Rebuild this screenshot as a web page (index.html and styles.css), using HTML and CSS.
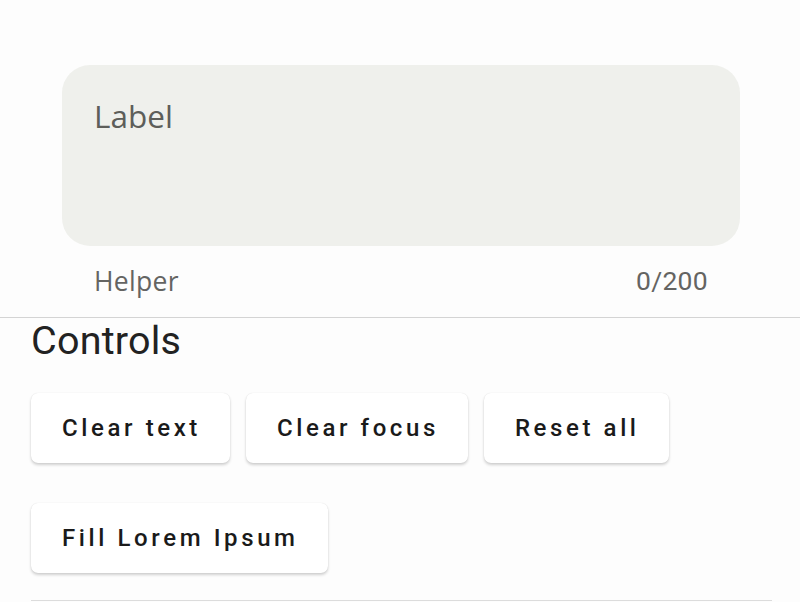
FILE: index.html
```html
<!DOCTYPE html>
<html lang="en">
<head>
<meta charset="utf-8">
<title>Text field</title>
<link rel="stylesheet" href="styles.css">
</head>
<body>
<div class="top">
  <div class="field">
    <span class="field-label">Label</span>
  </div>
  <div class="support">
    <span class="helper">Helper</span>
    <span class="counter">0/200</span>
  </div>
</div>
<div class="rule"></div>
<section class="controls">
  <h2 class="controls-title">Controls</h2>
  <div class="buttons">
    <button class="btn">Clear text</button>
    <button class="btn">Clear focus</button>
    <button class="btn">Reset all</button>
    <button class="btn">Fill Lorem Ipsum</button>
  </div>
  <div class="bottom-rule"></div>
</section>
</body>
</html>
```
FILE: styles.css
```css
html, body {
  margin: 0;
  padding: 0;
  background: #fdfdfd;
}
body {
  width: 800px;
  height: 602px;
  overflow: hidden;
  font-family: "Open Sans", "Noto Sans", sans-serif;
}
.top {
  padding: 65px 60px 0 62px;
}
.field {
  height: 181px;
  background: #eff0ec;
  border-radius: 28px;
  padding: 29px 32px 0 32px;
  box-sizing: border-box;
}
.field-label {
  display: block;
  font-size: 31.5px;
  line-height: 44px;
  color: #5d5e5a;
}
.support {
  display: flex;
  justify-content: space-between;
  padding: 17px 32px 0 32px;
  height: 54px;
  box-sizing: border-box;
}
.helper, .counter {
  font-size: 26.5px;
  line-height: 36px;
  color: #646462;
}
.helper {
  letter-spacing: 0.3px;
}
.counter {
  font-family: "Roboto", sans-serif;
  letter-spacing: 0.3px;
}
.rule {
  height: 1px;
  background: #d4d4d4;
  margin-top: 17px;
}
.controls {
  padding: 0 28px 0 31px;
}
.controls-title {
  margin: 0;
  font-family: "Roboto", sans-serif;
  font-weight: 400;
  font-size: 39.5px;
  line-height: 46px;
  color: #222222;
  letter-spacing: 0.2px;
}
.buttons {
  display: flex;
  flex-wrap: wrap;
  gap: 40px 16px;
  margin-top: 29px;
  padding-right: 60px;
}
.btn {
  height: 70px;
  padding: 0 29px 0 31px;
  border: none;
  border-radius: 7px;
  background: #ffffff;
  box-shadow: 0 2px 3px rgba(0, 0, 0, 0.18), 0 0 1px rgba(0, 0, 0, 0.12);
  font-family: "Roboto", sans-serif;
  font-weight: 500;
  font-size: 24px;
  letter-spacing: 3.6px;
  color: #1a1a1a;
}
.bottom-rule {
  height: 1px;
  background: #dcdcdc;
  margin-top: 27px;
}
```
